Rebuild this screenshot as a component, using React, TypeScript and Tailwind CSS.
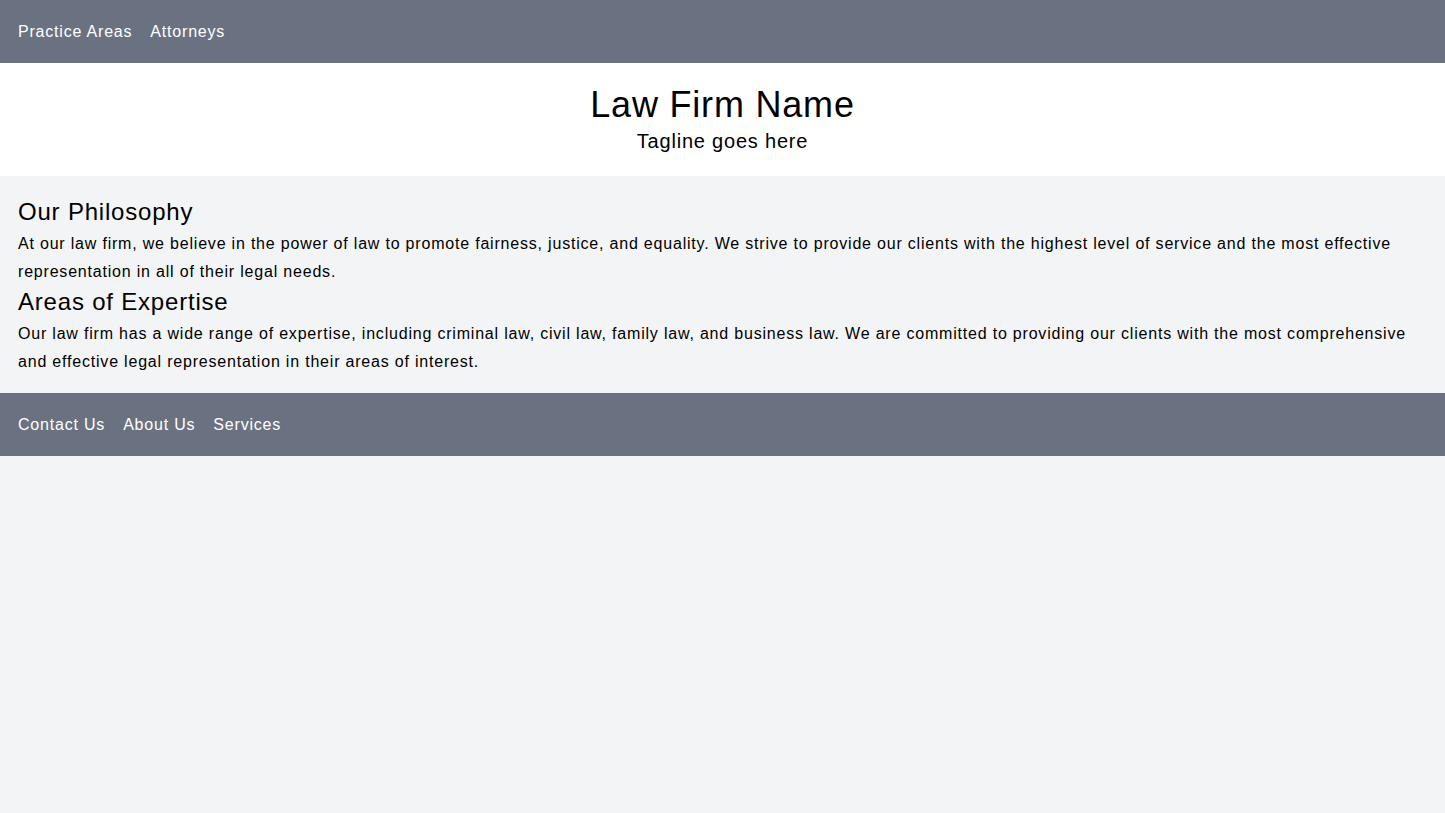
export default function App() {
  return (
    <div className="min-h-screen bg-gray-100 text-black font-['Liberation_Sans',Arial,sans-serif] tracking-wider">
      <nav className="flex h-[63px] items-center bg-gray-500 px-[18px]">
        <ul className="flex gap-[18px] text-white">
          <li>Practice Areas</li>
          <li>Attorneys</li>
        </ul>
      </nav>
      <header className="bg-white pt-[22px] pb-[21px] text-center">
        <h1 className="mb-0.5 text-4xl">Law Firm Name</h1>
        <p className="text-xl">Tagline goes here</p>
      </header>
      <main className="px-[18px] pt-5 pb-[17px]">
        <h2 className="mb-0.5 text-2xl">Our Philosophy</h2>
        <p className="leading-7">
          At our law firm, we believe in the power of law to promote fairness, justice, and equality. We strive to provide our clients with the highest level of service and the most effective representation in all of their legal needs.
        </p>
        <h2 className="mb-0.5 text-2xl">Areas of Expertise</h2>
        <p className="leading-7">
          Our law firm has a wide range of expertise, including criminal law, civil law, family law, and business law. We are committed to providing our clients with the most comprehensive and effective legal representation in their areas of interest.
        </p>
      </main>
      <footer className="flex h-[63px] items-center bg-gray-500 px-[18px]">
        <ul className="flex gap-[18px] text-white">
          <li>Contact Us</li>
          <li>About Us</li>
          <li>Services</li>
        </ul>
      </footer>
    </div>
  );
}
